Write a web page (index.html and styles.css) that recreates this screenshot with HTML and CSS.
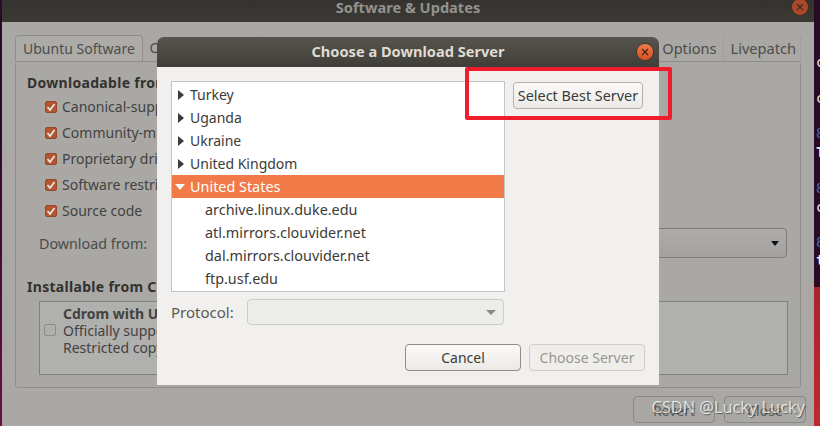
FILE: index.html
```html
<!DOCTYPE html>
<html lang="en">
<head>
  <meta charset="UTF-8">
  <meta name="viewport" content="width=device-width, initial-scale=1.0">
  <title>Choose a Download Server</title>
  <link rel="stylesheet" href="styles.css">
</head>
<body>
  <!-- terminal peeking out behind the main window -->
  <div class="terminal">
    <span class="term-line term-c1">c</span>
    <span class="term-line term-c2">c</span>
    <span class="term-line term-b1">8</span>
    <span class="term-line term-w1">T</span>
    <span class="term-line term-b2">8</span>
    <span class="term-line term-c3">c</span>
    <span class="term-line term-b3">8</span>
    <span class="term-line term-w2">t</span>
  </div>

  <div class="main-window">
    <div class="titlebar main-title">
      <span class="title-text">Software &amp; Updates</span>
      <span class="close-btn main-close">
        <svg viewBox="0 0 8 8" width="8" height="8"><path d="M1 1l6 6M7 1l-6 6"/></svg>
      </span>
    </div>
    <div class="main-body">
      <div class="tabs">
        <div class="tab active">Ubuntu Software</div>
        <div class="tab">Other Software</div>
        <div class="tabs-right">
          <div class="tab">Options</div>
          <div class="tab">Livepatch</div>
        </div>
      </div>
      <div class="panel">
        <h3 class="section">Downloadable from the Internet</h3>
        <div class="check-list">
          <div class="check-row"><span class="check on"><svg viewBox="0 0 12 12" width="12" height="12"><path d="M2.5 6l2.5 3 4.5-6"/></svg></span>Canonical-supported free and open-source software (main)</div>
          <div class="check-row"><span class="check on"><svg viewBox="0 0 12 12" width="12" height="12"><path d="M2.5 6l2.5 3 4.5-6"/></svg></span>Community-maintained free and open-source software (universe)</div>
          <div class="check-row"><span class="check on"><svg viewBox="0 0 12 12" width="12" height="12"><path d="M2.5 6l2.5 3 4.5-6"/></svg></span>Proprietary drivers for devices (restricted)</div>
          <div class="check-row"><span class="check on"><svg viewBox="0 0 12 12" width="12" height="12"><path d="M2.5 6l2.5 3 4.5-6"/></svg></span>Software restricted by copyright or legal issues (multiverse)</div>
          <div class="check-row"><span class="check on"><svg viewBox="0 0 12 12" width="12" height="12"><path d="M2.5 6l2.5 3 4.5-6"/></svg></span>Source code</div>
        </div>
        <div class="download-row">
          <span class="download-label">Download from:</span>
          <div class="main-combo"><span class="arrow-down"></span></div>
        </div>
        <h3 class="section section-cd">Installable from CD-ROM/DVD</h3>
        <div class="cd-frame">
          <span class="check cd-check"></span>
          <div class="cd-text">
            <b>Cdrom with Ubuntu 18.04 'Bionic Beaver'</b><br>
            Officially supported<br>
            Restricted copyright
          </div>
        </div>
      </div>
      <div class="main-actions">
        <div class="btn-dim">Revert</div>
        <div class="btn-dim">Close</div>
      </div>
    </div>
  </div>

  <div class="dialog">
    <div class="titlebar dialog-title">
      <span class="title-text">Choose a Download Server</span>
      <span class="close-btn dialog-close">
        <svg viewBox="0 0 8 8" width="8" height="8"><path d="M1 1l6 6M7 1l-6 6"/></svg>
      </span>
    </div>
    <div class="dialog-body">
      <div class="top-row">
        <div class="server-list">
          <div class="row"><span class="arrow-right"></span>Turkey</div>
          <div class="row"><span class="arrow-right"></span>Uganda</div>
          <div class="row"><span class="arrow-right"></span>Ukraine</div>
          <div class="row"><span class="arrow-right"></span>United Kingdom</div>
          <div class="row selected"><span class="arrow-open"></span>United States</div>
          <div class="row child">archive.linux.duke.edu</div>
          <div class="row child">atl.mirrors.clouvider.net</div>
          <div class="row child">dal.mirrors.clouvider.net</div>
          <div class="row child">ftp.usf.edu</div>
        </div>
        <button class="btn btn-best">Select Best Server</button>
      </div>
      <div class="protocol-row">
        <span class="protocol-label">Protocol:</span>
        <div class="protocol-combo"><span class="arrow-grey"></span></div>
      </div>
      <div class="dialog-actions">
        <button class="btn btn-action">Cancel</button>
        <button class="btn btn-action btn-off">Choose Server</button>
      </div>
    </div>
  </div>

  <div class="highlight"></div>
  <div class="watermark">CSDN @Lucky Lucky</div>
</body>
</html>
```

FILE: styles.css
```css
* {
  box-sizing: border-box;
}
html, body {
  height: 100%;
}
body {
  margin: 0;
  position: relative;
  overflow: hidden;
  background:
    linear-gradient(to bottom, #7e1a2a, #c0282f) right / 6px 100% no-repeat,
    linear-gradient(to bottom, #2c0a24 0, #2c0a24 130px, #6a1040 100%);
  font-family: 'Noto Sans', 'Open Sans', sans-serif;
  font-size: 14px;
  color: #3c3b37;
}

/* terminal */
.terminal {
  position: absolute;
  left: 0;
  top: 0;
  width: 820px;
  height: 287px;
  background: linear-gradient(to right, transparent 814px, #2c0a24 814px);
  font-family: 'DejaVu Sans Mono', monospace;
  font-size: 14px;
  color: #e8e8e8;
}
.term-line {
  position: absolute;
  left: 816px;
  line-height: 16px;
}
.term-c1 { top: 54px; }
.term-c2 { top: 90px; }
.term-b1 { top: 125px; color: #3f6cb5; }
.term-w1 { top: 144px; font-weight: bold; }
.term-b2 { top: 180px; color: #3f6cb5; }
.term-c3 { top: 199px; }
.term-b3 { top: 234px; color: #3f6cb5; }
.term-w2 { top: 252px; font-weight: bold; }

/* main window, dimmed by the dialog */
.main-window {
  position: absolute;
  left: 2px;
  top: 0;
  width: 812px;
  height: 426px;
  display: flex;
  flex-direction: column;
}
.titlebar {
  display: flex;
  align-items: center;
  justify-content: center;
  position: relative;
  flex: none;
}
.title-text {
  font-weight: bold;
  font-size: 14.6px;
}
.main-title {
  height: 22px;
  padding-bottom: 8px;
  background: linear-gradient(to bottom, #343330, #3a3934);
  color: #94928c;
}
.close-btn {
  position: absolute;
  width: 16px;
  height: 16px;
  border-radius: 50%;
  display: flex;
  align-items: center;
  justify-content: center;
}
.close-btn svg path {
  fill: none;
  stroke-width: 1.2;
}
.main-close {
  left: 790px;
  top: -1px;
  background: #a9492a;
  box-shadow: 0 0 0 1px #3f2c22;
}
.main-close svg path {
  stroke: #3b2a22;
}
.main-body {
  flex: 1;
  background: #a9a8a5;
  padding: 13px 13px 0;
  display: flex;
  flex-direction: column;
}
.tabs {
  display: flex;
  height: 26px;
  color: #4d4d4a;
}
.tabs-right {
  margin-left: auto;
  display: flex;
  font-size: 14.6px;
}
.tab {
  padding: 3px 6.5px 0;
  line-height: 20px;
  border-right: 1px solid #9f9e9b;
  white-space: nowrap;
}
.tab:last-child {
  padding-right: 4px;
}
.tab.active {
  width: 128px;
  padding-left: 7px;
  border: 1px solid #8f8e8b;
  border-bottom: none;
  border-radius: 4px 4px 0 0;
  background: #acaba8;
}
.panel {
  height: 327px;
  border: 1px solid #8f8e8b;
  border-radius: 3px;
  padding: 12px 12px 0 11px;
  color: #43423f;
}
.section {
  margin: 0;
  font-size: 14px;
  line-height: 18px;
  letter-spacing: 0.3px;
  color: #33322f;
  white-space: nowrap;
}
.check-list {
  margin-top: 1px;
  padding-left: 18px;
}
.check-row {
  height: 26px;
  display: flex;
  align-items: center;
  gap: 5px;
  white-space: nowrap;
}
.check {
  width: 12px;
  height: 12px;
  flex: none;
  margin-top: 2px;
  border-radius: 2px;
  border: 1px solid #8d8c89;
  background: #b0afac;
}
.check.on {
  border-color: #98482a;
  background: #b5552f;
  display: flex;
}
.check.on svg {
  margin: -1px;
}
.check.on svg path {
  fill: none;
  stroke: #e8e4df;
  stroke-width: 1.8;
}
.download-row {
  display: flex;
  align-items: center;
  margin-top: 5px;
  padding-left: 12px;
  height: 30px;
}
.download-label {
  width: 126px;
  font-size: 14.3px;
  color: #4c4b48;
}
.main-combo {
  flex: 1;
  height: 30px;
  margin-right: 1px;
  border: 1px solid #7d7c79;
  border-radius: 4px;
  background: linear-gradient(to bottom, #adacaa, #a3a2a0);
  position: relative;
}
.arrow-down {
  position: absolute;
  right: 7px;
  top: 12px;
  border: 4.5px solid transparent;
  border-top: 5px solid #111;
  border-bottom: none;
}
.section-cd {
  margin-top: 20px;
}
.cd-frame {
  margin: 5px 0 0 12px;
  height: 74px;
  width: 749px;
  border: 1px solid #82817e;
  background: #b0b0ae;
  display: flex;
  align-items: flex-start;
  padding: 3px 0 0 4px;
  gap: 7px;
}
.cd-check {
  margin-top: 19px;
}
.cd-text {
  line-height: 17px;
  white-space: nowrap;
}
.main-actions {
  display: flex;
  justify-content: flex-end;
  gap: 9px;
  margin-top: 8px;
  margin-right: -5px;
}
.btn-dim {
  width: 82px;
  height: 27px;
  border: 1px solid #8a8986;
  border-radius: 4px;
  text-align: center;
  line-height: 28px;
  color: #5f5e5b;
}

/* dialog */
.dialog {
  position: absolute;
  left: 157px;
  top: 37px;
  width: 502px;
  height: 348px;
  display: flex;
  flex-direction: column;
}
.dialog-title {
  height: 30px;
  padding-bottom: 2px;
  border-radius: 7px 7px 0 0;
  background: linear-gradient(to bottom, #57544c, #403e39);
  color: #dfdbd2;
}
.dialog-close {
  right: 6px;
  top: 7px;
  background: linear-gradient(to bottom, #ee7b4c, #d9501f);
  box-shadow: 0 0 0 1px #4a3528;
}
.dialog-close svg path {
  stroke: #40261a;
}
.dialog-body {
  flex: 1;
  background: #f1f0ee;
  padding: 14px 14px 0;
  display: flex;
  flex-direction: column;
}
.top-row {
  display: flex;
  align-items: flex-start;
  gap: 8px;
}
.server-list {
  width: 334px;
  height: 211px;
  flex: none;
  padding-top: 1px;
  background: #fff;
  border: 1px solid #c6c4c0;
  overflow: hidden;
}
.row {
  height: 23px;
  display: flex;
  align-items: center;
  padding-left: 6px;
  line-height: 23px;
  white-space: nowrap;
}
.row.child {
  padding-left: 33px;
  font-size: 14.4px;
}
.row.selected {
  background: #f17a48;
  color: #fff;
  padding-left: 3px;
  font-size: 14.4px;
}
.arrow-right {
  width: 0;
  height: 0;
  margin-right: 6px;
  border: 5px solid transparent;
  border-left: 6px solid #3c3b37;
  border-right: none;
}
.arrow-open {
  width: 0;
  height: 0;
  margin-right: 5px;
  border: 5.5px solid transparent;
  border-top: 6px solid #fff;
  border-bottom: none;
}
.btn {
  font: inherit;
  color: inherit;
  padding: 0;
  border: 1px solid #b5b2ad;
  border-radius: 4px;
  background: linear-gradient(to bottom, #fbfaf9, #eceae7);
}
.btn-best {
  width: 130px;
  height: 27px;
  margin-top: 1px;
  font-size: 14.4px;
}
.protocol-row {
  display: flex;
  align-items: center;
  margin-top: 7px;
}
.protocol-label {
  width: 76px;
  font-size: 15px;
  color: #5a5955;
}
.protocol-combo {
  width: 257px;
  height: 26px;
  position: relative;
  border: 1px solid #cfcdc9;
  border-radius: 4px;
  background: #ececea;
}
.arrow-grey {
  position: absolute;
  right: 7px;
  top: 10px;
  border: 5px solid transparent;
  border-top: 5px solid #8b8a86;
  border-bottom: none;
}
.dialog-actions {
  display: flex;
  justify-content: flex-end;
  gap: 8px;
  margin-top: 19px;
}
.btn-action {
  width: 116px;
  height: 27px;
  border-color: #8f8d88;
}
.btn-off {
  color: #98968f;
  border-color: #cfcdc9;
  background: #efeeec;
}

/* annotation drawn on the screenshot */
.highlight {
  position: absolute;
  left: 465px;
  top: 67px;
  width: 207px;
  height: 53px;
  border: 4px solid #ee1c2c;
  border-radius: 2px;
}
.watermark {
  position: absolute;
  right: 15px;
  top: 397px;
  font-family: 'Noto Sans', sans-serif;
  font-size: 16.3px;
  line-height: 20px;
  color: rgba(255,255,255,0.75);
  text-shadow: 1px 1px 1px rgba(0,0,0,0.45);
  white-space: nowrap;
}
```
